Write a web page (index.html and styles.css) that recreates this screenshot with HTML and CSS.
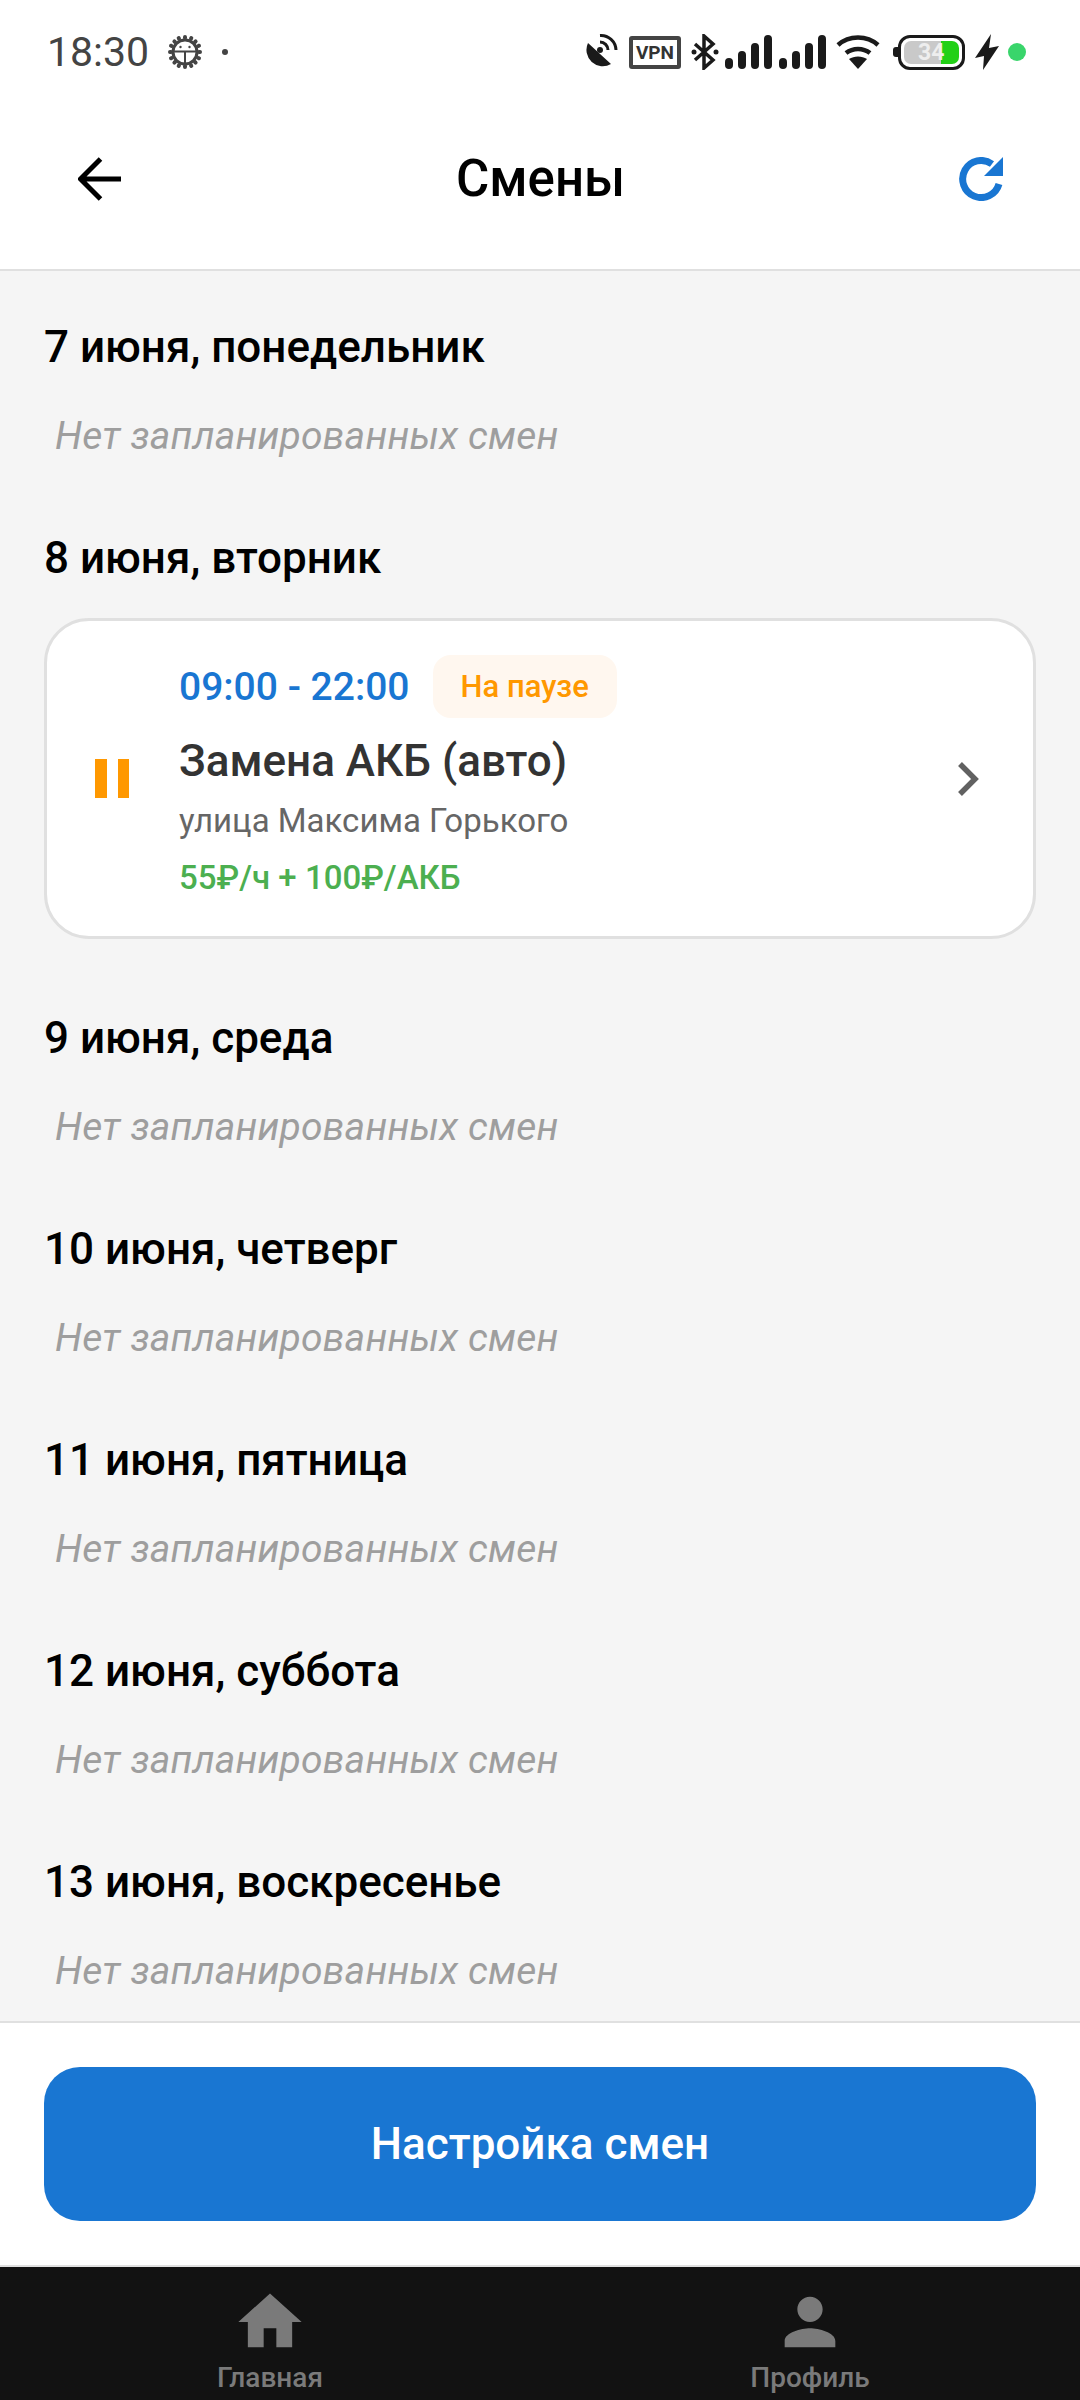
FILE: index.html
```html
<!DOCTYPE html>
<html lang="ru">
<head>
    <meta charset="UTF-8">
    <meta name="viewport" content="width=device-width, initial-scale=1.0">
    <title>Смены</title>
    <link rel="stylesheet" href="styles.css">
</head>
<body>
    <div class="status-bar">
        <span class="status-time">18:30</span>
        <svg class="status-gear" width="34" height="34" viewBox="0 0 34 34">
            <g fill="none" stroke="#444" stroke-width="3">
                <circle cx="17" cy="17" r="12"/>
            </g>
            <g stroke="#444" stroke-width="4" stroke-linecap="round">
                <path d="M17 2v1M17 31v1M2 17h1M31 17h1M6.400 6.400l.7.7M26.900 26.900l.7.7M27.600 6.400l-.7.7M7.100 26.900l-.7.7M10.700 3l.3.7M23 30.300l.3.7M23.300 3l-.3.7M11 30.300l-.3.7M3 10.700l.7.3M30.300 23l.7.3M31 10.700l-.7.3M3.700 23l-.7.3"/>
            </g>
            <path d="M6 16.500h22M17 16.500v13" stroke="#444" stroke-width="2" fill="none"/>
            <circle cx="12.500" cy="12" r="1.200" fill="#444"/>
            <circle cx="21.500" cy="12" r="1.200" fill="#444"/>
        </svg>
        <span class="status-dot"></span>
        <div class="status-icons">
            <svg class="ic-sat" width="36" height="38" viewBox="0 0 36 38">
                <path d="M5 10L28 31A16.300 16.300 0 0 1 5 10z" fill="#1a1a1a"/>
                <path d="M17 2.500A15 15 0 0 1 33 17M17 9A8 8 0 0 1 25 17" fill="none" stroke="#1a1a1a" stroke-width="3"/>
                <circle cx="17" cy="17" r="3" fill="#1a1a1a"/>
            </svg>
            <span class="ic-vpn">VPN</span>
            <svg class="ic-bt" width="28" height="36" viewBox="0 0 28 36">
                <path d="M4 10l18 16-9 8V2l9 8L4 26" fill="none" stroke="#1a1a1a" stroke-width="3.500"/>
                <circle cx="3" cy="18" r="2.500" fill="#1a1a1a"/>
                <circle cx="25" cy="18" r="2.500" fill="#1a1a1a"/>
            </svg>
            <svg class="ic-signal" width="48" height="34" viewBox="0 0 48 34">
                <g fill="none" stroke="#1a1a1a" stroke-width="8" stroke-linecap="round">
                    <path d="M4 27v3M17 20v10M30 12v18M43 4v26"/>
                </g>
            </svg>
            <svg class="ic-signal" width="48" height="34" viewBox="0 0 48 34">
                <g fill="none" stroke="#1a1a1a" stroke-width="8" stroke-linecap="round">
                    <path d="M4 27v3M17 20v10M30 12v18M43 4v26"/>
                </g>
            </svg>
            <svg class="ic-wifi" width="44" height="34" viewBox="0 0 44 34">
                <path d="M2 10C13 0 31 0 42 10M10 18c7-5.500 17-5.500 24 0" fill="none" stroke="#1a1a1a" stroke-width="4.500"/>
                <path d="M13 24c5-3.500 13-3.500 18 0L22 34z" fill="#1a1a1a"/>
            </svg>
            <div class="battery">
                <span class="battery-cap"></span>
                <div class="battery-body">
                    <div class="battery-fill">34</div>
                </div>
            </div>
            <svg class="ic-bolt" width="24" height="36" viewBox="0 0 24 36">
                <path d="M16 0L0 24l9-2-1 14L24 12l-10 2z" fill="#1a1a1a"/>
            </svg>
            <span class="ic-green"></span>
        </div>
    </div>

    <div class="header">
        <svg class="header-icon" width="44" height="44" viewBox="0 0 44 44">
            <path d="M43 22H3M22.500 2L2.500 22l20 20" fill="none" stroke="#000" stroke-width="5"/>
        </svg>
        <h1 class="header-title">Смены</h1>
        <svg class="header-icon" width="44" height="44" viewBox="0 0 44 44">
            <path d="M40 27A18.500 18.500 0 1 1 33 7" fill="none" stroke="#1976d2" stroke-width="7"/>
            <path d="M44 0v19H25z" fill="#1976d2"/>
        </svg>
    </div>

    <div class="shift-list">
        <div class="day">
            <div class="day-title">7 июня, понедельник</div>
            <div class="no-shifts">Нет запланированных смен</div>
        </div>
        <div class="day">
            <div class="day-title">8 июня, вторник</div>
            <div class="shift-card">
                <div class="pause-icon"><span></span><span></span></div>
                <div class="shift-info">
                    <div class="shift-top">
                        <span class="shift-time">09:00 - 22:00</span>
                        <span class="shift-badge">На паузе</span>
                    </div>
                    <div class="shift-name">Замена АКБ (авто)</div>
                    <div class="shift-address">улица Максима Горького</div>
                    <div class="shift-price">55₽/ч + 100₽/АКБ</div>
                </div>
                <svg class="shift-arrow" width="24" height="36" viewBox="0 0 24 36">
                    <path d="M3 3l15 15L3 33" fill="none" stroke="#616161" stroke-width="5.500"/>
                </svg>
            </div>
        </div>
        <div class="day">
            <div class="day-title">9 июня, среда</div>
            <div class="no-shifts">Нет запланированных смен</div>
        </div>
        <div class="day">
            <div class="day-title">10 июня, четверг</div>
            <div class="no-shifts">Нет запланированных смен</div>
        </div>
        <div class="day">
            <div class="day-title">11 июня, пятница</div>
            <div class="no-shifts">Нет запланированных смен</div>
        </div>
        <div class="day">
            <div class="day-title">12 июня, суббота</div>
            <div class="no-shifts">Нет запланированных смен</div>
        </div>
        <div class="day">
            <div class="day-title">13 июня, воскресенье</div>
            <div class="no-shifts">Нет запланированных смен</div>
        </div>
    </div>

    <div class="footer">
        <button class="settings-btn">Настройка смен</button>
    </div>

    <div class="bottom-nav">
        <div class="nav-item">
            <svg width="76" height="76" viewBox="0 0 24 24">
                <path d="M10 20v-6h4v6h5v-8h3L12 3 2 12h3v8z" fill="#7a7a7a"/>
            </svg>
            <span class="nav-label">Главная</span>
        </div>
        <div class="nav-item">
            <svg width="76" height="76" viewBox="0 0 24 24">
                <path d="M12 12c2.210 0 4-1.790 4-4s-1.790-4-4-4-4 1.790-4 4 1.790 4 4 4zm0 2c-2.670 0-8 1.340-8 4v2h16v-2c0-2.660-5.330-4-8-4z" fill="#7a7a7a"/>
            </svg>
            <span class="nav-label">Профиль</span>
        </div>
    </div>
</body>
</html>
```

FILE: styles.css
```css
* {
    box-sizing: border-box;
}
body {
    font-family: Roboto, sans-serif;
    background-color: #ffffff;
    display: flex;
    flex-direction: column;
    width: 1080px;
    height: 2400px;
    margin: 0;
    overflow: hidden;
}

/* status bar */
.status-bar {
    display: flex;
    align-items: center;
    height: 90px;
    padding: 14px 0 0 47px;
    flex-shrink: 0;
}
.status-time {
    font-size: 41px;
    color: #444444;
    width: 121px;
}
.status-dot {
    width: 6px;
    height: 6px;
    margin-left: 20px;
    border-radius: 50%;
    background-color: #444444;
}
.status-icons {
    display: flex;
    align-items: center;
    margin-left: auto;
    padding-right: 54px;
}
.ic-vpn {
    display: flex;
    align-items: center;
    justify-content: center;
    width: 52px;
    height: 33px;
    margin-left: 10px;
    border: 4px solid #444444;
    border-radius: 3px;
    font-size: 19px;
    font-weight: 700;
    color: #333333;
}
.ic-bt {
    margin-left: 10px;
}
.ic-signal {
    margin-left: 6px;
}
.ic-wifi {
    margin-left: 9px;
}
.battery {
    display: flex;
    align-items: center;
    margin-left: 13px;
}
.battery-cap {
    width: 6px;
    height: 10px;
    margin-right: -1px;
    border-radius: 3px 0 0 3px;
    background-color: #1a1a1a;
}
.battery-body {
    width: 67px;
    height: 35px;
    padding: 3px;
    border: 3px solid #1a1a1a;
    border-radius: 12px;
}
.battery-fill {
    height: 100%;
    padding-left: 14px;
    border-radius: 7px;
    font-size: 23px;
    line-height: 23px;
    font-weight: 700;
    color: #eeeeee;
    background: linear-gradient(to right, #c9c9c9 68%, #22d016 68%);
}
.ic-bolt {
    margin-left: 10px;
}
.ic-green {
    width: 18px;
    height: 18px;
    margin-left: 9px;
    border-radius: 50%;
    background-color: #39d56b;
}

/* header */
.header {
    display: flex;
    align-items: center;
    height: 181px;
    padding: 0 77px 2px 78px;
    border-bottom: 2px solid #e0e0e0;
    flex-shrink: 0;
}
.header-title {
    flex: 1;
    margin: 0;
    font-size: 51px;
    font-weight: 500;
    text-align: center;
    color: #000000;
}

/* list of days */
.shift-list {
    flex: 1;
    min-height: 0;
    overflow: hidden;
    padding: 51px 44px 0;
    background-color: #f5f5f5;
}
.day {
    margin-bottom: 74px;
}
.day-title {
    font-size: 44px;
    line-height: 50px;
    font-weight: 500;
    color: #000000;
}
.no-shifts {
    margin-top: 41px;
    padding-left: 11px;
    font-size: 39px;
    line-height: 46px;
    font-style: italic;
    letter-spacing: 0.2px;
    color: #9e9e9e;
}

/* shift card */
.shift-card {
    display: flex;
    align-items: center;
    height: 321px;
    margin-top: 35px;
    padding: 0 52px 0 48px;
    border: 3px solid #e0e0e0;
    border-radius: 45px;
    background-color: #ffffff;
}
.pause-icon {
    display: flex;
    gap: 11px;
    width: 34px;
}
.pause-icon span {
    width: 12px;
    height: 39px;
    background-color: #ff9800;
}
.shift-info {
    flex: 1;
    margin-left: 50px;
    padding-bottom: 5px;
}
.shift-top {
    display: flex;
    align-items: center;
    gap: 23px;
}
.shift-time {
    font-size: 39px;
    font-weight: 500;
    color: #1976d2;
}
.shift-badge {
    padding: 0 28px;
    font-size: 31px;
    line-height: 63px;
    font-weight: 500;
    border-radius: 18px;
    color: #ff9800;
    background-color: #fff7ef;
}
.shift-name {
    margin-top: 15px;
    font-size: 44px;
    line-height: 56px;
    font-weight: 500;
    color: #333333;
}
.shift-address {
    margin-top: 13px;
    font-size: 33px;
    line-height: 38px;
    color: #666666;
}
.shift-price {
    margin-top: 19px;
    font-size: 33px;
    line-height: 38px;
    font-weight: 500;
    color: #4caf50;
}

/* button at the bottom */
.footer {
    height: 246px;
    padding: 44px 44px 0;
    border-top: 2px solid #e0e0e0;
    border-bottom: 2px solid #e0e0e0;
    flex-shrink: 0;
}
.settings-btn {
    display: block;
    width: 100%;
    height: 154px;
    border: none;
    border-radius: 36px;
    font-family: Roboto, sans-serif;
    font-size: 44px;
    font-weight: 500;
    color: #ffffff;
    background-color: #1976d2;
}

/* bottom navigation */
.bottom-nav {
    display: flex;
    height: 133px;
    background-color: #121212;
    flex-shrink: 0;
}
.nav-item {
    flex: 1;
    display: flex;
    flex-direction: column;
    align-items: center;
    padding-top: 17px;
}
.nav-label {
    font-size: 28px;
    line-height: 36px;
    font-weight: 500;
    color: #7a7a7a;
}
```
